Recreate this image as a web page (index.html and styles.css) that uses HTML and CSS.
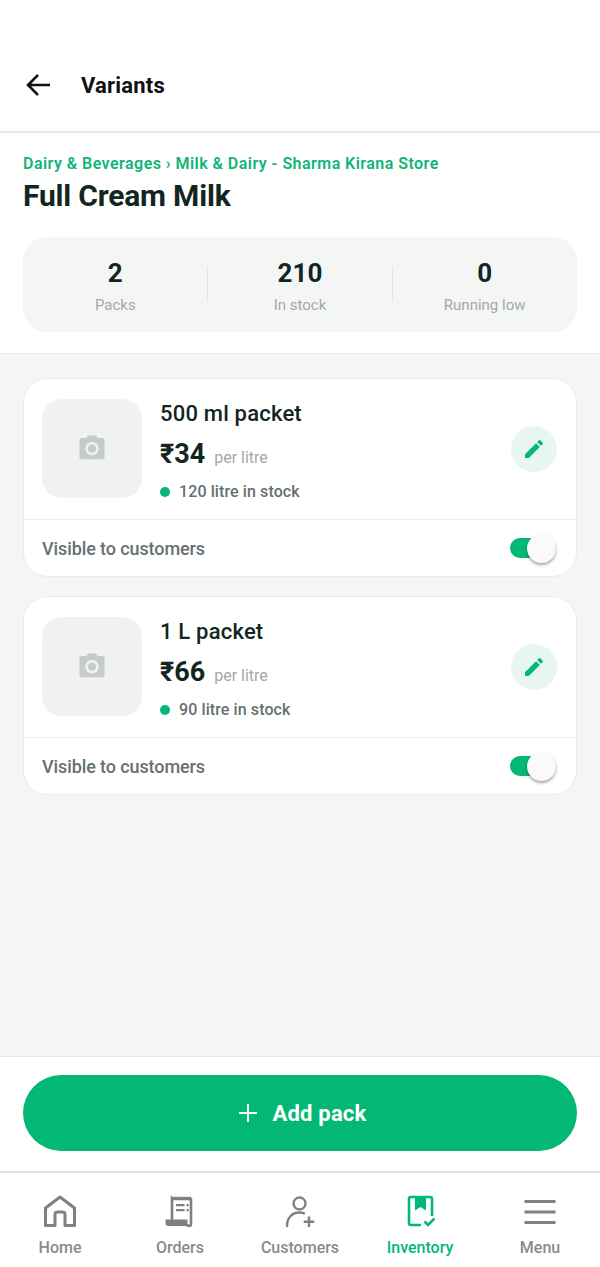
FILE: index.html
```html
<!DOCTYPE html>
<html lang="en">
<head>
    <meta charset="UTF-8">
    <meta name="viewport" content="width=device-width, initial-scale=1.0">
    <title>Variants</title>
    <link rel="stylesheet" href="styles.css">
</head>
<body>
    <div class="app">
        <header class="top-bar">
            <svg class="back-icon" viewBox="0 0 26 24" width="26" height="24"><path d="M25 12H3M13 2 3 12l10 10" fill="none" stroke="#111" stroke-width="2.600"/></svg>
            <h1 class="top-title">Variants</h1>
        </header>

        <section class="summary">
            <div class="crumbs">Dairy &amp; Beverages › Milk &amp; Dairy - Sharma Kirana Store</div>
            <h2 class="product-name">Full Cream Milk</h2>
            <div class="stats">
                <div class="stat"><div class="stat-value">2</div><div class="stat-label">Packs</div></div>
                <div class="stat"><div class="stat-value">210</div><div class="stat-label">In stock</div></div>
                <div class="stat"><div class="stat-value">0</div><div class="stat-label">Running low</div></div>
            </div>
        </section>

        <main class="pack-list">
            <article class="pack-card">
                <div class="pack-main">
                    <div class="pack-photo">
                        <svg viewBox="0 0 24 24" width="30" height="30"><path class="camera" fill-rule="evenodd" d="M9 2 7.200 4H3.500C2.700 4 2 4.700 2 5.500v14c0 .8.7 1.500 1.500 1.500h17c.8 0 1.500-.7 1.500-1.500v-14c0-.8-.7-1.500-1.500-1.500h-3.700L15 2H9Zm3 5a5.500 5.500 0 1 1 0 11 5.500 5.500 0 0 1 0-11Zm0 2.200a3.300 3.300 0 1 0 0 6.600 3.300 3.300 0 0 0 0-6.600Z"/></svg>
                    </div>
                    <div class="pack-info">
                        <div class="pack-name">500 ml packet</div>
                        <div class="pack-price"><span class="price">₹34</span><span class="unit">per litre</span></div>
                        <div class="pack-stock"><span class="dot"></span>120 litre in stock</div>
                    </div>
                    <button class="edit-btn">
                        <svg viewBox="0 0 24 24" width="24" height="24"><path class="pencil" d="M3 17.250V21h3.750L17.810 9.940l-3.750-3.750L3 17.250ZM20.710 7.040a1 1 0 0 0 0-1.410l-2.340-2.340a1 1 0 0 0-1.410 0l-1.830 1.830 3.750 3.750 1.830-1.830Z"/></svg>
                    </button>
                </div>
                <div class="pack-visible">
                    <span>Visible to customers</span>
                    <span class="toggle"><span class="knob"></span></span>
                </div>
            </article>

            <article class="pack-card">
                <div class="pack-main">
                    <div class="pack-photo">
                        <svg viewBox="0 0 24 24" width="30" height="30"><path class="camera" fill-rule="evenodd" d="M9 2 7.200 4H3.500C2.700 4 2 4.700 2 5.500v14c0 .8.7 1.500 1.500 1.500h17c.8 0 1.500-.7 1.500-1.500v-14c0-.8-.7-1.500-1.500-1.500h-3.700L15 2H9Zm3 5a5.500 5.500 0 1 1 0 11 5.500 5.500 0 0 1 0-11Zm0 2.200a3.300 3.300 0 1 0 0 6.600 3.300 3.300 0 0 0 0-6.600Z"/></svg>
                    </div>
                    <div class="pack-info">
                        <div class="pack-name">1 L packet</div>
                        <div class="pack-price"><span class="price">₹66</span><span class="unit">per litre</span></div>
                        <div class="pack-stock"><span class="dot"></span>90 litre in stock</div>
                    </div>
                    <button class="edit-btn">
                        <svg viewBox="0 0 24 24" width="24" height="24"><path class="pencil" d="M3 17.250V21h3.750L17.810 9.940l-3.750-3.750L3 17.250ZM20.710 7.040a1 1 0 0 0 0-1.410l-2.340-2.340a1 1 0 0 0-1.410 0l-1.830 1.830 3.750 3.750 1.830-1.830Z"/></svg>
                    </button>
                </div>
                <div class="pack-visible">
                    <span>Visible to customers</span>
                    <span class="toggle"><span class="knob"></span></span>
                </div>
            </article>
        </main>

        <div class="add-bar">
            <button class="add-btn">
                <svg viewBox="0 0 20 20" width="20" height="20"><path d="M10 1v18M1 10h18" stroke="#fff" stroke-width="2" fill="none"/></svg>
                Add pack
            </button>
        </div>

        <nav class="bottom-nav">
            <div class="nav-item">
                <svg viewBox="0 0 36 36" width="36" height="36"><path d="M3.500 31.500V14L18 3 32.500 14v17.500H23V20.500a2.500 2.500 0 0 0-2.500-2.500h-5a2.500 2.500 0 0 0-2.500 2.500v11H3.500Z" fill="none" stroke="#808080" stroke-width="3" stroke-linejoin="round"/></svg>
                <span>Home</span>
            </div>
            <div class="nav-item">
                <svg viewBox="0 0 36 36" width="36" height="36"><path d="M10 26V4l1.500 1.200L13 4l1.500 1.200L16 4l1.500 1.200L19 4l1.500 1.200L22 4l1.500 1.200L25 4l1.500 1.200L28 4l1 1.200V30a2 2 0 0 1-4 0" fill="none" stroke="#808080" stroke-width="2.600"/><path d="M14 10h8.500v2.200H14zm0 5h8.500v2.200H14zm10.500-5h2.200v2.200h-2.200zm0 5h2.200v2.200h-2.200z" fill="#808080"/><path d="M3.500 25.500h22v6.500H6.500a3 3 0 0 1-3-3v-3.500Z" fill="#808080"/></svg>
                <span>Orders</span>
            </div>
            <div class="nav-item">
                <svg viewBox="0 0 36 36" width="36" height="36"><circle cx="17.500" cy="9.500" r="6" fill="none" stroke="#808080" stroke-width="2.400"/><path d="M5 32c0-8 5-13.500 12.500-13.500 1.500 0 3 .2 4.500.8" fill="none" stroke="#808080" stroke-width="2.400" stroke-linecap="round"/><path d="M27 22.500v10.500M21.700 27.700h10.600" stroke="#808080" stroke-width="2.400" fill="none"/></svg>
                <span>Customers</span>
            </div>
            <div class="nav-item active">
                <svg viewBox="0 0 36 36" width="36" height="36"><path d="M19 31H9a2 2 0 0 1-2-2V5a2 2 0 0 1 2-2h19a2 2 0 0 1 2 2v17" fill="none" stroke="#03b875" stroke-width="2.600"/><path d="M13 4h11v12.500l-5.500-3.500-5.500 3.500V4Z" fill="#03b875"/><path d="m22.500 27.500 3.500 3.500 6.500-6.500" fill="none" stroke="#03b875" stroke-width="2.600"/></svg>
                <span>Inventory</span>
            </div>
            <div class="nav-item">
                <svg viewBox="0 0 36 36" width="36" height="36"><path d="M2.500 7.500h31M2.500 18h31M2.500 28.500h31" stroke="#808080" stroke-width="3" fill="none"/></svg>
                <span>Menu</span>
            </div>
        </nav>
    </div>
</body>
</html>
```

FILE: styles.css
```css
* {
    box-sizing: border-box;
}

body {
    margin: 0;
    font-family: Roboto, "Liberation Sans", sans-serif;
    background-color: #fff;
}

.app {
    display: flex;
    flex-direction: column;
    height: 1267px;
}

.top-bar {
    display: flex;
    align-items: center;
    gap: 30px;
    height: 133px;
    padding: 39px 0 0 25px;
    border-bottom: 2px solid #e6e7e7;
}

.top-title {
    margin: 0;
    font-size: 22px;
    font-weight: 700;
    letter-spacing: 0.2px;
    color: #111;
}

.summary {
    height: 221px;
    padding: 20px 23px 0;
    border-bottom: 1px solid #e6e9e8;
}

.crumbs {
    font-size: 16px;
    line-height: 21px;
    font-weight: 600;
    letter-spacing: 0.46px;
    color: #0fb577;
}

.product-name {
    margin: 3px 0 0;
    font-size: 30px;
    line-height: 38px;
    font-weight: 700;
    letter-spacing: -0.2px;
    color: #12261f;
}

.stats {
    display: grid;
    grid-template-columns: repeat(3, 1fr);
    height: 95px;
    margin-top: 22px;
    padding: 20px 0;
    border-radius: 24px;
    background-color: #f4f6f6;
}

.stat {
    position: relative;
    text-align: center;
}

.stat + .stat::before {
    content: "";
    position: absolute;
    top: 9px;
    left: -1px;
    width: 1px;
    height: 36px;
    background-color: #dfe3e2;
}

.stat + .stat + .stat::before {
    left: 0;
}

.stat-value {
    font-size: 26px;
    line-height: 32px;
    font-weight: 700;
    color: #12261f;
}

.stat-label {
    margin-top: 7px;
    font-size: 15px;
    line-height: 18px;
    color: #a3a8a7;
}

.pack-list {
    flex: 1;
    padding: 24px 23px 0;
    background-color: #f4f6f6;
}

.pack-card {
    margin-bottom: 19px;
    border: 1px solid #e8ebea;
    border-radius: 24px;
    background-color: #fff;
}

.pack-main {
    display: flex;
    align-items: center;
    height: 141px;
    padding: 0 19px 0 18px;
    border-bottom: 1px solid #eceeee;
}

.pack-photo {
    display: flex;
    align-items: center;
    justify-content: center;
    width: 100px;
    height: 99px;
    margin-top: -2px;
    border-radius: 20px;
    background-color: #f0f2f2;
}

.camera {
    fill: #c6cac9;
}

.pack-info {
    flex: 1;
    margin-left: 18px;
    padding-top: 3px;
}

.pack-name {
    font-size: 22px;
    line-height: 28px;
    font-weight: 500;
    letter-spacing: 0.2px;
    color: #12261f;
}

.pack-price {
    display: flex;
    align-items: baseline;
    gap: 9px;
    margin-top: 10px;
}

.price {
    font-size: 27px;
    line-height: 32px;
    font-weight: 700;
    color: #12261f;
}

.unit {
    font-size: 16px;
    color: #a3a8a7;
}

.pack-stock {
    display: flex;
    align-items: center;
    gap: 9px;
    margin-top: 12px;
    font-size: 16px;
    line-height: 20px;
    font-weight: 500;
    letter-spacing: 0.1px;
    color: #667072;
}

.dot {
    width: 10px;
    height: 10px;
    border-radius: 50%;
    background-color: #03b875;
}

.edit-btn {
    display: flex;
    align-items: center;
    justify-content: center;
    width: 46px;
    height: 46px;
    padding: 0;
    border: none;
    border-radius: 50%;
    background-color: #e7f6f0;
}

.pencil {
    fill: #03b875;
}

.pack-visible {
    display: flex;
    align-items: center;
    justify-content: space-between;
    height: 56px;
    padding: 0 20px 0 18px;
    font-size: 18px;
    font-weight: 500;
    letter-spacing: -0.1px;
    color: #667072;
}

.toggle {
    position: relative;
    display: block;
    width: 46px;
    height: 20px;
    border-radius: 10px;
    background-color: #03b875;
}

.knob {
    position: absolute;
    top: -4px;
    right: 0;
    width: 29px;
    height: 29px;
    border-radius: 50%;
    background-color: #fafafa;
    box-shadow: 0 2px 3px rgba(0, 0, 0, 0.35);
}

.add-bar {
    flex: none;
    height: 117px;
    padding: 18px 23px 0;
    border-top: 1px solid #e6e9e8;
    border-bottom: 2px solid #e1e2e2;
}

.add-btn {
    display: flex;
    align-items: center;
    justify-content: center;
    gap: 15px;
    width: 100%;
    height: 76px;
    padding: 0 0 0 4px;
    border: none;
    border-radius: 38px;
    background-color: #03b875;
    color: #fff;
    font-family: inherit;
    font-size: 22px;
    font-weight: 700;
    letter-spacing: 0.2px;
}

.bottom-nav {
    display: grid;
    grid-template-columns: repeat(5, 1fr);
    flex: none;
    height: 94px;
    padding-top: 21px;
}

.nav-item {
    display: flex;
    flex-direction: column;
    align-items: center;
    gap: 8px;
    font-size: 16px;
    line-height: 20px;
    font-weight: 500;
    color: #8a8a8a;
}

.nav-item.active {
    color: #03b875;
}
```
